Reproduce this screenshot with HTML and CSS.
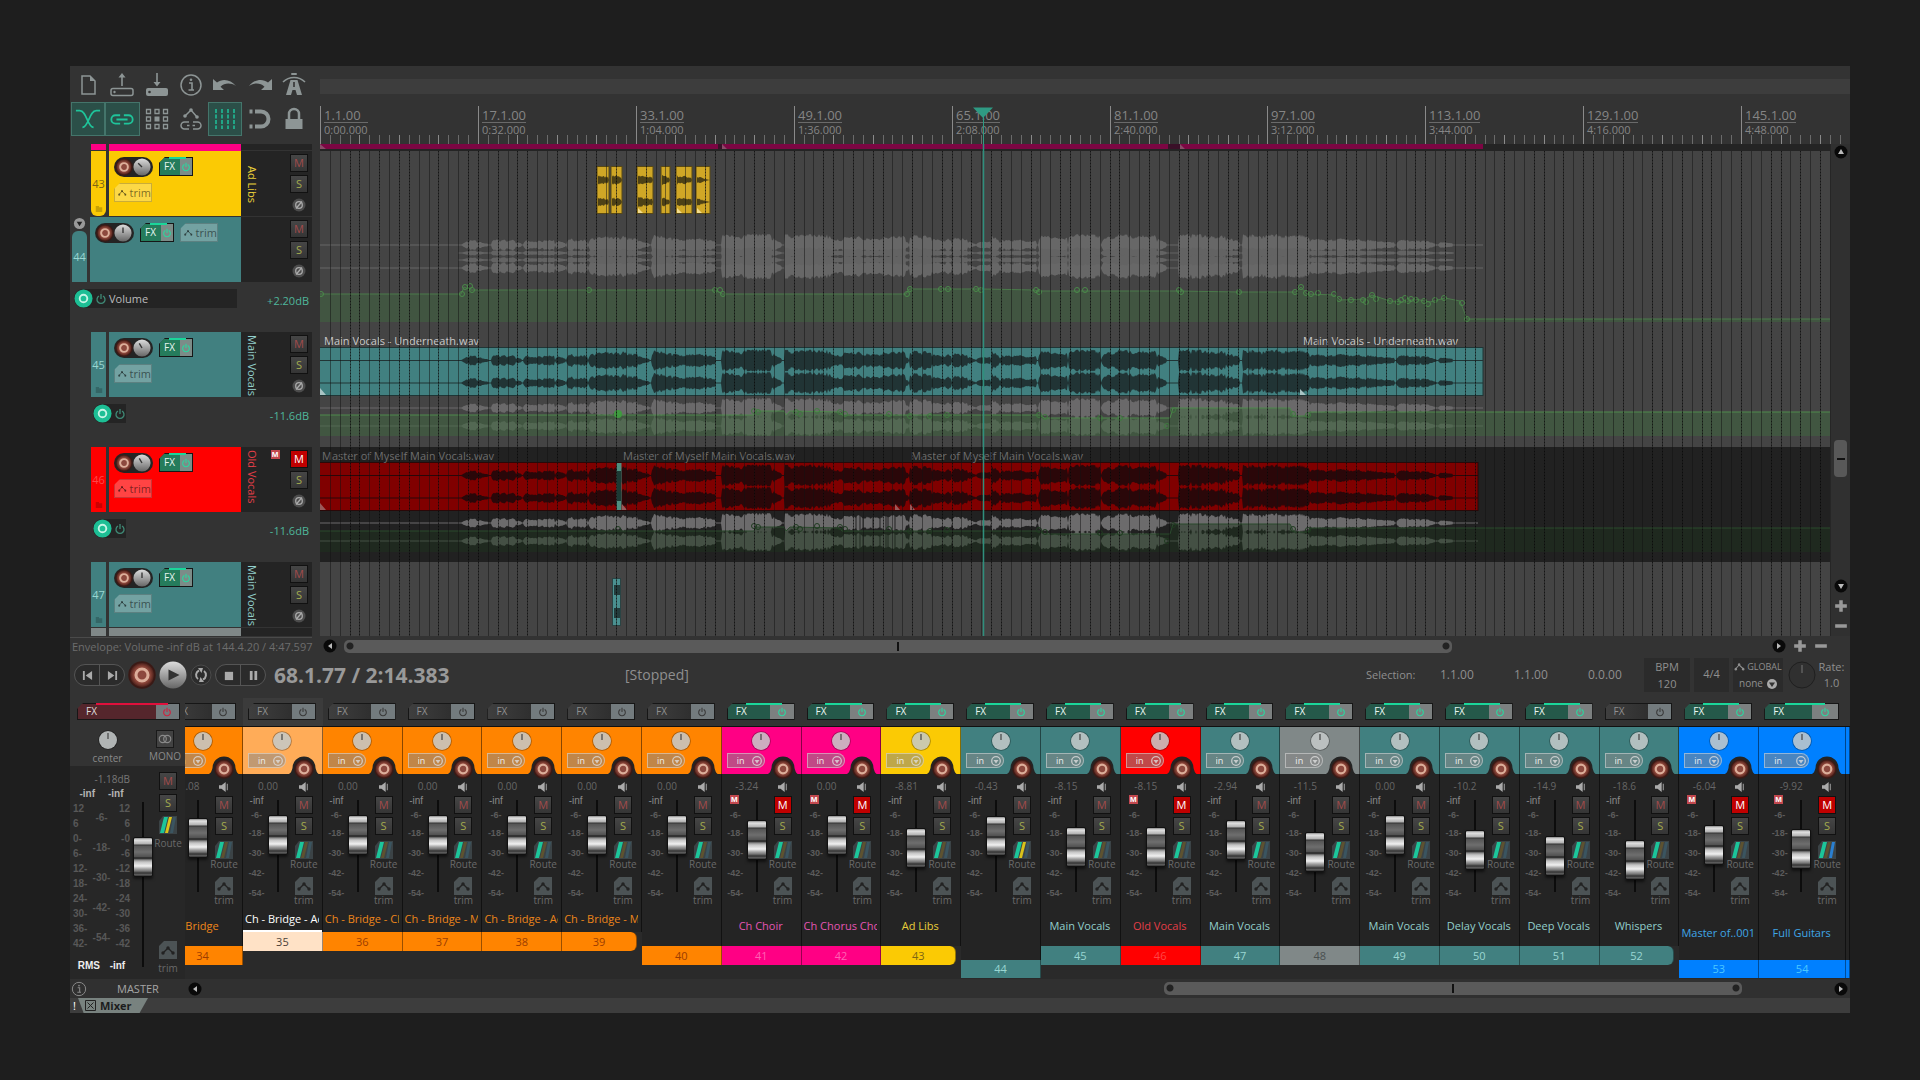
FILE: index.html
```html
<!DOCTYPE html>
<html lang="en">
<head>
<meta charset="utf-8">
<title>Mixer</title>
<link rel="stylesheet" href="styles.css">
</head>
<body>
<svg class="defs" aria-hidden="true">
  <defs>
    <symbol id="i-new" viewBox="0 0 24 24"><path d="M6 3h8l5 5v13H6z" fill="none" stroke="currentColor" stroke-width="1.5"/><path d="M14 3v5h5z" fill="currentColor"/></symbol>
    <symbol id="i-open" viewBox="0 0 24 24"><rect x="1" y="15.500" width="22" height="7" rx="2" fill="none" stroke="currentColor" stroke-width="1.500"/><circle cx="4.500" cy="19" r="1.200" fill="currentColor"/><path d="M12 0l3.500 4.500h-2.700V13h-1.600V4.500H8.500z" fill="currentColor"/></symbol>
    <symbol id="i-save" viewBox="0 0 24 24"><rect x="1" y="15" width="22" height="8" rx="2" fill="currentColor"/><circle cx="4.500" cy="19" r="1.300" fill="#333"/><path d="M12 13.500l3.500-4.500h-2.700V0h-1.600v9H8.500z" fill="currentColor"/></symbol>
    <symbol id="i-info" viewBox="0 0 24 24"><circle cx="12" cy="12" r="10" fill="none" stroke="currentColor" stroke-width="1.500"/><path d="M10 10h3v7M9.500 17h5.500" fill="none" stroke="currentColor" stroke-width="1.600"/><circle cx="12" cy="6.800" r="1.300" fill="currentColor"/></symbol>
    <symbol id="i-undo" viewBox="0 0 24 24"><path d="M0 6v11h11l-3.500-3.200c4-4 10-4.300 15.500-.8C18 6.500 9.500 5 4 9.500z" fill="currentColor"/></symbol>
    <symbol id="i-redo" viewBox="0 0 24 24"><path d="M24 6v11H13l3.500-3.200c-4-4-10-4.300-15.500-.8C6 6.500 14.500 5 20 9.500z" fill="currentColor"/></symbol>
    <symbol id="i-metro" viewBox="0 0 24 24"><path d="M1 9C7 3 17 3 23 9" fill="none" stroke="currentColor" stroke-width="1.600"/><rect x="9" y="0" width="6" height="2" rx="1" fill="currentColor"/><path d="M8.500 7h7L20 22h-5l-1.500-5h-3L9 22H4z" fill="currentColor"/><path d="M12 9v5" stroke="#333" stroke-width="1.600"/></symbol>
    <symbol id="i-xfade" viewBox="0 0 28 24"><path d="M1 3h4c8 0 8 18 15 18M27 3h-4C15 3 15 21 8 21" fill="none" stroke="currentColor" stroke-width="1.800"/></symbol>
    <symbol id="i-link" viewBox="0 0 28 24"><path d="M12 8H7a4.500 4.500 0 0 0 0 9h5M16 8h5a4.500 4.500 0 0 1 0 9h-5M8 12.500h12" fill="none" stroke="currentColor" stroke-width="2"/></symbol>
    <symbol id="i-group" viewBox="0 0 24 24"><g fill="none" stroke="currentColor" stroke-width="1.300"><path d="M1.500 2.500h4v4h-4zM10 2.500h4v4h-4zM18.500 2.500h4v4h-4zM1.500 10h4v4h-4zM18.500 10h4v4h-4zM1.500 17.500h4v4h-4zM10 17.500h4v4h-4zM18.500 17.500h4v4h-4z"/></g><path d="M9.500 9.500h5v5h-5z" fill="currentColor"/></symbol>
    <symbol id="i-envlink" viewBox="0 0 24 24"><path d="M6 9l6-6 6 7" fill="none" stroke="currentColor" stroke-width="1.500"/><circle cx="6" cy="9" r="1.800" fill="currentColor"/><circle cx="12" cy="3" r="1.800" fill="currentColor"/><circle cx="18" cy="10" r="1.800" fill="currentColor"/><path d="M10 15H5.500a3.500 3.500 0 0 0 0 7H10M14 15h4.500a3.500 3.500 0 0 1 0 7H14M8 18.500h2.500M13.500 18.500H16" fill="none" stroke="currentColor" stroke-width="1.500"/></symbol>
    <symbol id="i-grid" viewBox="0 0 24 24"><path d="M3 2v20M9 2v20M15 2v20M21 2v20" stroke="currentColor" stroke-width="1.500" stroke-dasharray="4 1.500"/></symbol>
    <symbol id="i-snap" viewBox="0 0 24 24"><path d="M7 4.500h6a7.500 7.500 0 0 1 0 15H7" fill="none" stroke="currentColor" stroke-width="4"/><path d="M1.500 2.500h3v4h-3zM1.500 17.500h3v4h-3z" fill="currentColor"/></symbol>
    <symbol id="i-lock" viewBox="0 0 24 24"><path d="M3.500 12h17v10h-17z" fill="currentColor"/><path d="M7 12V7a5 5 0 0 1 10 0v5" fill="none" stroke="currentColor" stroke-width="2.500"/></symbol>
    <symbol id="i-power" viewBox="0 0 12 12"><path d="M4 3a4 4 0 1 0 4 0M6 1v5" fill="none" stroke="currentColor" stroke-width="1.300"/></symbol>
    <symbol id="i-trim" viewBox="0 0 14 12"><path d="M2 9l4.500-5L12 9" fill="none" stroke="currentColor" stroke-width="1.400"/><circle cx="2" cy="9.500" r="1.700" fill="currentColor"/><circle cx="6.500" cy="3.500" r="1.700" fill="currentColor"/><circle cx="12" cy="9.500" r="1.700" fill="currentColor"/></symbol>
    <symbol id="i-phase" viewBox="0 0 14 14"><circle cx="7" cy="7" r="6.500" fill="#4c4c4c"/><circle cx="7" cy="7" r="3.300" fill="none" stroke="#aaa" stroke-width="1.300"/><path d="M4 10.500l6-7" stroke="#aaa" stroke-width="1.300"/></symbol>
    <symbol id="i-speaker" viewBox="0 0 12 12"><path d="M0 4h3l5-4v12L3 8H0z" fill="#aaa"/><path d="M10 2v8" stroke="#888" stroke-width="1.500"/></symbol>
    <symbol id="i-folder" viewBox="0 0 8 8"><path d="M0 1h4v1.500h4V8H0z" fill="currentColor"/></symbol>
    <radialGradient id="g-rec"><stop offset="0" stop-color="#8d4a40"/><stop offset=".7" stop-color="#8a4438"/><stop offset="1" stop-color="#4e211b"/></radialGradient>
    <linearGradient id="g-play" x1="0" y1="0" x2="0" y2="1"><stop offset="0" stop-color="#ddd"/><stop offset="1" stop-color="#666"/></linearGradient>
    <symbol id="i-rec" viewBox="0 0 20 20"><circle cx="10" cy="10" r="9.800" fill="#3a1915"/><circle cx="10" cy="10" r="8.500" fill="url(#g-rec)"/><circle cx="10" cy="10" r="4.300" fill="none" stroke="#dcae9a" stroke-width="2.200"/></symbol>
    <symbol id="i-left" viewBox="0 0 14 14"><circle cx="7" cy="7" r="6.500" fill="#090909"/><path d="M9 4v6L5 7z" fill="#bbb"/></symbol>
    <symbol id="i-right" viewBox="0 0 14 14"><circle cx="7" cy="7" r="6.500" fill="#090909"/><path d="M5 4v6l4-3z" fill="#bbb"/></symbol>
    <symbol id="i-up" viewBox="0 0 14 14"><circle cx="7" cy="7" r="6.500" fill="#090909"/><path d="M4 9h6L7 4z" fill="#bbb"/></symbol>
    <symbol id="i-down" viewBox="0 0 14 14"><circle cx="7" cy="7" r="6.500" fill="#090909"/><path d="M4 5h6l-3 5z" fill="#bbb"/></symbol>
    <symbol id="i-plus" viewBox="0 0 12 12"><path d="M4.500 1h3v3.500H11v3H7.500V11h-3V7.500H1v-3h3.500z" fill="#999"/></symbol>
    <symbol id="i-minus" viewBox="0 0 12 12"><path d="M1 4.500h10v3H1z" fill="#999"/></symbol>
    <symbol id="i-drop" viewBox="0 0 10 10"><circle cx="5" cy="5" r="5" fill="#aaa"/><path d="M2 3.500h6L5 8z" fill="#333"/></symbol>
  </defs>
</svg>

<main class="app">
  <section class="top">
    <nav class="toolbar" aria-label="Main toolbar">
      <button class="tool" aria-label="New project"><svg><use href="#i-new"/></svg></button>
      <button class="tool" aria-label="Open project"><svg><use href="#i-open"/></svg></button>
      <button class="tool" aria-label="Save project"><svg><use href="#i-save"/></svg></button>
      <button class="tool" aria-label="Project settings"><svg><use href="#i-info"/></svg></button>
      <button class="tool" aria-label="Undo"><svg><use href="#i-undo"/></svg></button>
      <button class="tool" aria-label="Redo"><svg><use href="#i-redo"/></svg></button>
      <button class="tool" aria-label="Metronome"><svg><use href="#i-metro"/></svg></button>
      <button class="tool on" aria-label="Auto-crossfade"><svg><use href="#i-xfade"/></svg></button>
      <button class="tool on" aria-label="Item grouping"><svg><use href="#i-link"/></svg></button>
      <button class="tool" aria-label="Ripple editing"><svg><use href="#i-group"/></svg></button>
      <button class="tool" aria-label="Move envelopes with items"><svg><use href="#i-envlink"/></svg></button>
      <button class="tool on" aria-label="Grid"><svg><use href="#i-grid"/></svg></button>
      <button class="tool" aria-label="Snap"><svg><use href="#i-snap"/></svg></button>
      <button class="tool" aria-label="Lock"><svg><use href="#i-lock"/></svg></button>
    </nav>
    <div class="timeline-head">
      <div class="region-bar"></div>
      <div class="ruler" id="ruler"></div>
    </div>
  </section>

  <section class="edit">
    <div class="tcp" id="tcp"></div>
    <div class="arrange" id="arrange"></div>
    <div class="vscroll">
      <button class="rnd" aria-label="Scroll up"><svg><use href="#i-up"/></svg></button>
      <div class="vtrack"><div class="vthumb"></div></div>
      <button class="rnd" aria-label="Scroll down"><svg><use href="#i-down"/></svg></button>
      <button class="rnd" aria-label="Zoom in"><svg><use href="#i-plus"/></svg></button>
      <button class="rnd" aria-label="Zoom out"><svg><use href="#i-minus"/></svg></button>
    </div>
  </section>

  <section class="status">
    <p class="status-text">Envelope: Volume -inf dB at 144.4.20 / 4:47.597</p>
    <div class="hscroll">
      <button class="rnd" aria-label="Scroll left"><svg><use href="#i-left"/></svg></button>
      <div class="htrack"><div class="hthumb arrange-thumb"></div></div>
      <button class="rnd" aria-label="Scroll right"><svg><use href="#i-right"/></svg></button>
      <button class="rnd" aria-label="Zoom in"><svg><use href="#i-plus"/></svg></button>
      <button class="rnd" aria-label="Zoom out"><svg><use href="#i-minus"/></svg></button>
    </div>
  </section>

  <section class="transport">
    <div class="pill">
      <button aria-label="Go to start"><svg viewBox="0 0 12 12"><path d="M1 1h2v10H1zM11 1v10L4 6z" fill="#aaa"/></svg></button>
      <button aria-label="Go to end"><svg viewBox="0 0 12 12"><path d="M9 1h2v10H9zM1 1v10l7-5z" fill="#aaa"/></svg></button>
    </div>
    <button class="big" aria-label="Record"><svg viewBox="0 0 20 20"><use href="#i-rec"/></svg></button>
    <button class="big" aria-label="Play"><svg viewBox="0 0 28 28"><circle cx="14" cy="14" r="13.500" fill="url(#g-play)"/><path d="M9.500 8.500v11l11-5.500z" fill="#333"/></svg></button>
    <button class="loop" aria-label="Repeat"><svg viewBox="0 0 22 22"><circle cx="11" cy="11" r="10" fill="#2c2c2c" stroke="#4a4a4a"/><path d="M8 15a5 5 0 0 1 1-8.500M14 7a5 5 0 0 1-1 8.500" fill="none" stroke="#aaa" stroke-width="2"/><path d="M8 4h5l-1.500 5zM14 18H9l1.500-5z" fill="#aaa"/></svg></button>
    <div class="pill">
      <button aria-label="Stop"><svg viewBox="0 0 12 12"><path d="M2 2h9v9H2z" fill="#aaa"/></svg></button>
      <button aria-label="Pause"><svg viewBox="0 0 12 12"><path d="M2 1h3v10H2zM7 1h3v10H7z" fill="#aaa"/></svg></button>
    </div>
    <output class="clock">68.1.77 / 2:14.383</output>
    <output class="state">[Stopped]</output>
    <div class="selection"><b>Selection:</b><span>1.1.00</span><span>1.1.00</span><span>0.0.00</span></div>
    <div class="box bpm"><span>BPM</span><span>120</span></div>
    <div class="box sig">4/4</div>
    <div class="box global">
      <label for="global"><svg viewBox="0 0 14 12"><use href="#i-trim"/></svg>GLOBAL</label>
      <div class="global-pick"><select id="global"><option>none</option></select><svg viewBox="0 0 10 10"><use href="#i-drop"/></svg></div>
    </div>
    <svg class="rate-knob" viewBox="0 0 28 28"><circle cx="14" cy="14" r="13" fill="#303030" stroke="#1f1f1f"/><path d="M14 4v8" stroke="#777"/></svg>
    <div class="rate"><span>Rate:</span><span>1.0</span></div>
  </section>

  <section class="mixer">
    <div class="master" id="master"></div>
    <div class="strips" id="strips"></div>
  </section>

  <section class="mixer-foot">
    <div class="master-label"><svg viewBox="0 0 24 24"><use href="#i-info"/></svg><span>MASTER</span></div>
    <button class="rnd" aria-label="Scroll mixer left"><svg><use href="#i-left"/></svg></button>
    <div class="htrack"><div class="hthumb mixer-thumb"></div></div>
    <button class="rnd" aria-label="Scroll mixer right"><svg><use href="#i-right"/></svg></button>
  </section>
  <footer class="docker"><span class="bang">!</span><button class="tab"><svg viewBox="0 0 11 11"><path d="M.5.500h10v10H.5zM2.500 2.500l6 6M8.500 2.500l-6 6" fill="none" stroke="#222"/></svg>Mixer</button></footer>
</main>
<script src="script.js"></script>
</body>
</html>
```
FILE: styles.css
```css
* { box-sizing: border-box; }
body { margin: 0; padding: 66px 70px; background: #1e1e1e; color: #8a8a8a; font: 11px/14px "Open Sans", "Noto Sans", sans-serif; }
button, select, input { font: inherit; color: inherit; margin: 0; padding: 0; border: 0; background: none; }
p { margin: 0; }
svg { display: block; }
.defs { position: absolute; width: 0; height: 0; }
.app { background: #333; overflow: hidden; }

/* toolbar and ruler */
.top { display: grid; grid-template-columns: 250px 1fr; }
.toolbar { display: grid; grid-template-columns: repeat(7, 1fr); grid-auto-rows: 34px; width: 241px; padding: 2px 0 8px 1px; }
.tool { display: grid; place-items: center; color: #8d9595; border: 1px solid transparent; }
.tool svg { width: 24px; height: 24px; }
.tool.on { background: #2b4f48; border-color: #44756b; color: #1fc49a; }
.tool.on svg { width: 26px; }
.timeline-head { display: flex; flex-direction: column; min-width: 0; }
.region-bar { height: 15px; margin-top: 13px; background: #3d3d3d; }
.ruler { position: relative; flex: 1; overflow: hidden; }
.ruler svg { position: absolute; inset: 0; width: 100%; height: 100%; }
.mark { position: absolute; top: 14px; color: #858585; line-height: 13px; }
.mark b { display: block; font-weight: 400; font-size: 13px; line-height: 14px; border-bottom: 1px solid #6a6a6a; }

/* track panel */
.edit { display: grid; grid-template-columns: 250px 1fr 19px; height: 492px; overflow: hidden; }
.tcp { overflow: hidden; }
.row { display: flex; height: 65px; width: 242px; padding-left: 21px; color: var(--ink); }
.row.parent { padding-left: 2px; }
.row.gap { height: 66px; padding-bottom: 1px; }
.row.tail { height: 8px; overflow: hidden; }
.row.head { height: 7px; padding-bottom: 1px; overflow: hidden; }
.num { position: relative; display: flex; align-items: center; justify-content: center; width: 15px; background: var(--c); }
.num svg { position: absolute; left: 4px; bottom: 4px; width: 8px; height: 7px; color: #0003; }
.row.last .num { border-radius: 0 0 6px 6px; }
.parent .num { border-radius: 6px 6px 0 0; margin-top: 14px; }
.num .parent-tick { left: 1px; top: -14px; width: 13px; height: 13px; }
.panel { display: flex; flex-wrap: wrap; align-content: flex-start; gap: 6px; width: 132px; margin-left: 3px; padding: 6px 5px; background: var(--c); }
.parent .panel { width: 151px; margin-left: 3px; }
.side { display: flex; flex: 1; justify-content: space-between; background: #242424; padding: 3px 4px 0 5px; min-width: 0; }
.vname { writing-mode: vertical-rl; font-size: 11px; line-height: 12px; height: 62px; white-space: nowrap; color: var(--name); }
.last .vname { padding-top: 12px; }
.side-btns { display: flex; flex-direction: column; align-items: center; gap: 3px; width: 18px; }
.side-btns svg { width: 14px; height: 14px; margin-top: 2px; }
.badge { width: 9px; height: 9px; background: #c2484e; color: #fff; font: 700 8px/9px "Liberation Sans", sans-serif; text-align: center; }
.side .badge { margin: 0 -2px 0 0; }
.pan-pill { display: flex; width: 39px; height: 20px; padding: 1px; border-radius: 10px; background: #242424; }
.pan-pill svg { width: 18px; height: 18px; }
.fx { position: relative; display: flex; width: 100%; height: 17px; border: 1px solid #161616; background: #3a3a3a; color: #8f8f8f; clip-path: polygon(6px 0, 100% 0, 100% 100%, 0 100%, 0 6px); font-size: 10px; line-height: 15px; }
.fx span { flex: 3; text-align: left; padding-left: 8px; background: linear-gradient(90deg, #3f3f3f, #2f2f2f); }
.fx i { flex: 2; display: grid; place-items: center; height: 100%; background: #737b7e; color: #3a3a3a; }
.fx svg { width: 10px; height: 10px; }
.fx.on { color: #e8f5f0; }
.fx.on span { background: #25594a; }
.fx.on i { background: #7c8080; color: #2bd8a0; }
.fx.on::before { content: ""; position: absolute; top: -1px; left: 27%; width: 55%; height: 2px; background: #1bd69a; }
.panel .fx { width: 34px; height: 19px; line-height: 17px; }
.panel .fx span { padding-left: 4px; flex: 5; background: #257c5c; }
.panel .fx i { flex: 4; background: #7c8c88; }
.trim { display: flex; align-items: center; gap: 3px; width: 38px; height: 19px; padding-left: 3px; border: 1px solid #0003; background: #fff4; color: #0008; font-size: 11px; clip-path: polygon(6px 0, 100% 0, 100% 100%, 0 100%, 0 6px); }
.trim svg { width: 12px; height: 11px; }
.ms { width: 18px; height: 18px; border: 1px solid #111; background: linear-gradient(#464646, #353535); text-align: center; font-size: 11px; line-height: 16px; }
.m { color: #a24b4b; }
.s { color: #a3ab4e; }
.m.on { background: #c00000; color: #fff; }
.env { display: flex; align-items: flex-start; justify-content: space-between; width: 241px; height: 50px; padding: 7px 2px 0 4px; }
.env.child { padding-left: 23px; }
.env-name { display: flex; align-items: center; gap: 2px; background: #242424; height: 19px; border-radius: 9px 0 0 9px; color: #bbb; }
.env-name svg { width: 19px; height: 19px; }
.env-name svg + svg { width: 12px; height: 12px; color: #3f8a76; }
.env-name label { width: 128px; font-size: 11px; }
.env.child .env-name { width: 33px; }
.env output { color: #4fb79b; line-height: 14px; margin-top: 5px; }

/* arrange canvas */
.arrange { position: relative; overflow: hidden; background: #444; border-right: 1px solid #262626; }
.lane { position: relative; }
.lane svg, .overlay { width: 100%; height: 100%; }
.overlay { position: absolute; inset: 0; pointer-events: none; }
.item-name { position: absolute; top: 2px; white-space: nowrap; color: #c8c8c8; }
.lane.muted { background: #212121; }
.lane.muted .item-name { color: #6d6d6d; }

.vscroll { display: flex; flex-direction: column; align-items: center; gap: 6px; padding: 1px 0 3px; background: #303030; }
.vtrack { flex: 1; padding-top: 275px; }
.vthumb { width: 13px; height: 37px; border-radius: 4px; background: linear-gradient(#111, #111) center/8px 2px no-repeat #585858; }
.rnd { width: 14px; height: 14px; flex: none; }
.rnd svg { width: 14px; height: 14px; }

.status { display: grid; grid-template-columns: 250px 1fr; height: 20px; align-items: center; }
.status-text { padding-left: 2px; font-size: 11px; color: #6d6d6d; white-space: nowrap; border-top: 1px solid #4a4a4a; width: 242px; line-height: 18px; }
.hscroll { display: flex; align-items: center; gap: 7px; padding: 0 22px 0 3px; }
.htrack { flex: 1; }
.hthumb { height: 13px; border-radius: 5px; background: radial-gradient(circle at 6px 6px, #222 3px, transparent 4px), radial-gradient(circle at calc(100% - 6px) 6px, #222 3px, transparent 4px), linear-gradient(#111, #111) center/2px 9px no-repeat, #5a5a5a; }
.arrange-thumb { width: 78%; }

/* transport */
.transport { display: flex; align-items: center; height: 42px; padding: 0 3px 4px 4px; color: #8f8f8f; }
.pill { display: flex; width: 51px; height: 22px; border: 1px solid #555; border-radius: 11px; background: #2b2b2b; }
.pill button { flex: 1; display: grid; place-items: center; }
.pill button + button { border-left: 1px solid #555; }
.pill svg { width: 11px; height: 11px; }
.big { width: 28px; height: 28px; margin-left: 3px; }
.loop { width: 22px; height: 22px; margin: 0 3px; }
.clock { margin-left: 8px; width: 351px; font-size: 21px; line-height: 28px; font-weight: 700; color: #999; }
.state { font-size: 14px; }
.selection { display: flex; gap: 27px; margin-left: auto; margin-right: 24px; font-size: 12px; }
.selection b { width: 47px; font-size: 11px; font-weight: 400; white-space: nowrap; }
.selection span { width: 47px; white-space: nowrap; }
.selection span:last-child { width: 32px; }
.box { background: #2b2b2b; height: 34px; margin-right: 4px; text-align: center; line-height: 17px; }
.box span { display: block; }
.bpm { width: 46px; }
.sig { width: 35px; line-height: 32px; }
.global { width: 50px; margin-right: 5px; font-size: 9px; }
.global label, .global-pick { display: flex; align-items: center; justify-content: center; gap: 2px; height: 17px; }
.global label svg { width: 11px; height: 9px; }
.global-pick svg { width: 10px; height: 10px; }
select { appearance: none; }
.global select { font-size: 10px; width: 26px; }
.rate-knob { width: 28px; height: 28px; }
.rate { width: 31px; text-align: center; line-height: 16px; font-size: 11px; }
.rate span { display: block; }

/* mixer */
.mixer { display: flex; height: 281px; background: #2a2a2a; }
.master { width: 115px; background: #272727; font-size: 10px; }
.master-head { display: grid; grid-template-columns: 63px 1fr; height: 68px; padding: 5px 6px 0; background: #333; justify-items: center; row-gap: 8px; }
.master-head .fx { grid-column: 1 / 3; width: 103px; background: #55262c; color: #ddd; }
.master-head .fx span { background: #55262c; flex: 3; }
.master-head .fx i { flex: 1; color: #d0213e; }
.master-head .fx::before { content: ""; position: absolute; top: -1px; left: 18px; width: 72px; height: 2px; background: #e0103c; }
.knob-cell { display: flex; flex-direction: column; align-items: center; gap: 1px; }
.knob { width: 20px; height: 20px; }
.mono { margin-left: 10px; }
.mono svg { width: 18px; height: 18px; background: #424242; border: 1px solid #1a1a1a; }
.master-body { display: flex; height: 213px; }
.meters { width: 63px; padding: 6px 3px 0 3px; color: #666; }
.meters .db { text-align: right; line-height: 15px; font-size: 10px; color: #777; }
.inf { display: flex; justify-content: space-around; font: 700 10px/14px "Liberation Sans", sans-serif; color: #b5b5b5; }
.cols { display: flex; height: 158px; font: 700 10px/15px "Liberation Sans", sans-serif; color: #585858; }
.cols div { flex: 1; }
.cols div:nth-child(2) { line-height: 30px; text-align: center; padding-top: 2px; }
.cols div:nth-child(3) { text-align: right; }
.cols span { display: block; }
.inf.rms { color: #eee; }
.side-col { display: flex; flex-direction: column; align-items: center; width: 22px; font-size: 10px; line-height: 10px; color: #6a6a6a; }
.route, .trimbox { width: 18px; height: 18px; }
.route svg, .trimbox svg { width: 18px; height: 18px; }
.master .side-col { padding: 6px 0; margin-left: 4px; gap: 4px; }
.master .side-col .trimbox { margin-top: auto; }
.fader { appearance: none; writing-mode: vertical-lr; direction: rtl; display: block; width: 20px; background: linear-gradient(#0c0c0c, #0c0c0c) center/2px calc(100% - 10px) no-repeat; }
.fader::-webkit-slider-runnable-track { width: 20px; }
.fader::-webkit-slider-thumb { appearance: none; width: 20px; height: 40px; border: 1px solid #111; border-radius: 2px; box-shadow: 0 2px 3px #0008;
  background: linear-gradient(#8a8a8a 0, #e2e2e2 2px, #b0b0b0 6px, #333 7px, #555 8px, #6e6e6e 14px, #505050 19px, #161616 20px, #8a8a8a 22px, #c4c4c4 24px, #f0f0f0 28px, #a0a0a0 31px, #777 33px, #333 35px, #666 37px, #222 38px); }
.master .fader { height: 175px; margin-top: 31px; }

.strips { display: flex; flex: 1; min-width: 0; align-items: flex-start; overflow: hidden; }
.strip { flex: 1 1 0; min-width: 0; }
.strip.first { flex: none; width: 58px; display: flex; justify-content: flex-end; overflow: hidden; }
.strip.first .strip-in { flex: none; width: 80px; }
.strip.wide { flex: none; width: 87px; }
.strip.edge { flex: none; width: 4px; }
.fxrow { height: 29px; padding: 5px 7px 0 5px; background: #333; border-bottom: 1px solid #111; }
.sel .fxrow { background: #3b3b3b; }
.cap { position: relative; height: 47px; padding-top: 4px; background: var(--c); border-right: 1px solid #0007; }
.cap .knob { margin: 0 auto; }
.in { display: flex; align-items: center; width: 38px; height: 15px; margin: 2px 0 0 5px; padding: 0 2px 0 9px; border: 1px solid #fff6; border-radius: 0 8px 8px 0; background: #8888; color: #eee; }
.wide .in { width: 45px; }
.in select { flex: 1; min-width: 0; font-size: 9px; line-height: 12px; }
.in svg { width: 10px; height: 10px; opacity: .8; }
.arm { position: absolute; right: 2px; bottom: -5px; width: 32px; height: 22px; }
.arm svg { width: 32px; height: 22px; overflow: visible; }
.body { display: flex; flex-direction: column; height: 172px; background: #242424; border-right: 1px solid #111; }
.up .body { height: 158px; }
.low .body { height: 186px; }
.ctl { display: flex; justify-content: space-between; height: 131px; flex: none; padding: 0 7px 0 2px; }
.wide .ctl { padding-left: 9px; }
.ctl-left { width: 46px; }
.val { height: 21px; padding-top: 5px; text-align: center; color: #666; font-size: 10px; }
.fader-row { display: flex; }
.scale { width: 23px; font: 700 9px/20px "Liberation Sans", sans-serif; color: #5c5c5c; text-align: center; }
.scale span, .scale .badge { display: block; }
.scale span:first-child { line-height: 12px; font-weight: 400; font-size: 10px; color: #888; }
.scale span:nth-child(2) { line-height: 16px; }
.scale .badge { margin: 0 0 3px 6px; }
.ctl .fader { height: 102px; }
.ctl .side-col { padding-top: 8px; }
.side-col .spk { width: 12px; height: 12px; margin-bottom: 4px; }
.ctl .ms + .ms { margin: 3px 0 6px; }
.ctl .trimbox { margin-top: 8px; }
.name { flex: 1; display: grid; align-items: center; margin: 0 3px 0 2px; }
.name span { overflow: hidden; white-space: nowrap; text-align: center; font-size: 11px; color: var(--name); line-height: 16px; }
.tag { display: flex; align-items: center; justify-content: center; height: 19px; background: var(--c); color: var(--ink); border-right: 1px solid #0006; }
.end .tag { margin-right: 5px; border-radius: 0 6px 6px 0; }
.sel .tag { background: #ffe2c6; }
.sel .body { box-shadow: inset 0 -2px #fff; }
.low .tag { height: 18px; }

.mixer-foot { display: flex; align-items: center; height: 19px; background: #303030; padding-right: 2px; }
.master-label { display: flex; align-items: center; width: 118px; color: #a5a5a5; }
.master-label svg { width: 16px; height: 16px; margin-left: 1px; color: #888; }
.master-label span { margin-left: 30px; }
.mixer-foot .htrack { margin: 0 92px 0 0; }
.mixer-thumb { width: 578px; margin-left: auto; }
.docker { display: flex; height: 15px; background: #3d3d3d; }
.bang { color: #fff; width: 8px; padding-left: 3px; line-height: 15px; }
.tab { display: flex; align-items: center; gap: 4px; width: 70px; padding-left: 7px; background: #78827f; color: #1c1c1c; font-weight: 700; line-height: 15px; clip-path: polygon(0 0, 100% 0, 88% 100%, 8% 100%); }
.tab svg { width: 11px; height: 11px; }
```
FILE: script.js
```js
const COLORS = {
  orange: ['#ff8400', '#9c3c00', '#ee861a'],
  light: ['#ffac58', '#4a4038', '#ffffff'],
  pink: ['#ff0084', '#ff62b4', '#e456b4'],
  yellow: ['#fbca04', '#7d6614', '#e8cf3a'],
  teal: ['#418080', '#9ad6d2', '#92cfcb'],
  red: ['#ff0000', '#ff4646', '#e23e48'],
  grey: ['#808888', '#4a5050', '#999999'],
  blue: ['#0080ff', '#4cc8ff', '#3fa6e6']
};
const vars = c => `--c:${COLORS[c][0]};--ink:${COLORS[c][1]};--name:${COLORS[c][2]}`;
const use = (id, box) => `<svg viewBox="${box}"><use href="#${id}"/></svg>`;
const knob = () => `<svg class="knob" viewBox="0 0 20 20"><circle cx="10" cy="10" r="9.800" fill="#0005"/><circle cx="10" cy="10" r="9" fill="#d4d9d9" fill-opacity=".8"/><path d="M10 3v6" stroke="#444" stroke-width="1.200"/></svg>`;
const fx = on => `<button class="fx${on ? ' on' : ''}"><span>FX</span><i>${use('i-power', '0 0 12 12')}</i></button>`;
const ms = mute => `<button class="ms m${mute ? ' on' : ''}">M</button><button class="ms s">S</button>`;
const fader = (label, max, v) => `<input class="fader" type="range" aria-label="${label}" min="0" max="${max}" value="${v}">`;
const route = extra => `<button class="route" aria-label="Route"><svg viewBox="0 0 18 18"><path d="M4 0h14v18H0V5z" fill="#3b4346"/><path d="M5 1h4L5 17H1z" fill="#1cc59a"/><path d="M10 1h3L9 17H6z" fill="${extra === 'y' ? '#d9c21a' : '#5d5230'}"/><path d="M14 1h3l-3 16h-3z" fill="${extra === 'b' ? '#2a7fd0' : '#3b5560'}"/></svg></button><span>Route</span>`;
const trimbox = () => `<button class="trimbox" aria-label="Trim"><svg viewBox="0 0 18 18"><path d="M5 0h13v18H0V5z" fill="#4c5355"/><path d="M4 12l5-5 5 5" fill="none" stroke="#222" stroke-width="1.400"/><circle cx="4" cy="12" r="1.700" fill="#222"/><circle cx="9" cy="7" r="1.700" fill="#222"/><circle cx="14" cy="12" r="1.700" fill="#222"/></svg></button><span>trim</span>`;

/* track control panel */
const pan = angle => `<div class="pan-pill">${use('i-rec', '0 0 20 20')}<svg viewBox="0 0 20 20"><circle cx="10" cy="10" r="9.500" fill="url(#g-play)"/><path d="M10 4v6" stroke="#333" stroke-width="1.500" transform="rotate(${angle} 10 10)"/></svg></div>`;
const row = (n, c, name, o = {}) => `<div class="row ${o.cls || ''}" style="${vars(c)}">
  <div class="num">${o.parent ? `<svg class="parent-tick" viewBox="0 0 14 14"><circle cx="7" cy="7" r="6" fill="#999"/><path d="M4 5h6l-3 5z" fill="#222"/></svg>` : `${use('i-folder', '0 0 8 8')}`}${n}</div>
  <div class="panel">${pan(o.angle || 0)}${fx(true)}<button class="trim">${use('i-trim', '0 0 14 12')}trim</button></div>
  <div class="side"><span class="vname">${name}</span>${o.mute ? '<span class="badge">M</span>' : ''}<div class="side-btns">${ms(o.mute)}${use('i-phase', '0 0 14 14')}</div></div></div>`;
const ring = `<svg viewBox="0 0 20 20"><circle cx="10" cy="10" r="9.500" fill="#1dbf95"/><circle cx="10" cy="10" r="4" fill="none" stroke="#c6f5e6" stroke-width="2"/></svg>`;
const env = (label, v) => `<div class="env${label ? '' : ' child'}"><div class="env-name">${ring}${use('i-power', '0 0 12 12')}${label ? `<label>${label}</label>` : ''}</div><output>${v}</output></div>`;
document.getElementById('tcp').innerHTML =
  `<div class="row head" style="${vars('pink')}"><div class="num"></div><div class="panel"></div><div class="side"></div></div>` +
  row(43, 'yellow', 'Ad Libs', { cls: 'gap last', angle: -45 }) +
  row(44, 'teal', '', { cls: 'parent', parent: true }) + env('Volume', '+2.20dB') +
  row(45, 'teal', 'Main Vocals', { angle: -30 }) + env('', '-11.6dB') +
  row(46, 'red', 'Old Vocals', { angle: -30, mute: true }) + env('', '-11.6dB') +
  row(47, 'teal', 'Main Vocals', { cls: 'gap' }) +
  `<div class="row tail" style="${vars('grey')}"><div class="num"></div><div class="panel"></div><div class="side"></div></div>`;

/* ruler: one label every 16 bars */
const LABEL = 157.9, BAR = LABEL / 16;
const stamps = ['0:00.000', '0:32.000', '1:04.000', '1:36.000', '2:08.000', '2:40.000', '3:12.000', '3:44.000', '4:16.000', '4:48.000'];
let ticks = '';
for (let i = 0; i < 400; i++) {
  const x = Math.round(i * BAR) + .5;
  ticks += `<path d="M${x} ${i % 16 ? 41 : 12}V50" stroke="${i % 4 ? '#6b6b6b' : '#8a8a8a'}"/>`;
}
document.getElementById('ruler').innerHTML = `<svg>${ticks}</svg>` +
  stamps.map((t, i) => `<div class="mark" style="left:${Math.round(i * LABEL) + 4}px"><b>${i * 16 + 1}.1.00</b>${t}</div>`).join('') +
  `<svg><path d="M653 13.500h20L663 24z" fill="#2f9a83"/><path d="M663.500 22V60" stroke="#2f9a83"/></svg>`;

/* loudness of the vocal take: start, end, level at start, level at end */
const TAKE = [
  [141, 148, .1, .4], [148, 157, .45, .4], [157, 169, .35, .1], [172, 180, .65, .4], [180, 196, .5, .45], [196, 202, .4, .1], [204, 222, .5, .35],
  [222, 235, .45, .4], [236, 246, .45, .2], [247, 268, .55, .5], [269, 300, .8, .65], [300, 318, .8, .65], [318, 330, .5, .1],
  [332, 352, .75, .85], [352, 384, .65, .55], [384, 396, .55, .35], [402, 452, 1, 1], [452, 462, .8, .2], [465, 508, 1, 1], [508, 522, .9, .4],
  [522, 560, .7, .75], [560, 586, .9, .8], [586, 589, .6, .2], [590, 612, 1, .8], [612, 625, .7, .45], [625, 632, .7, .4], [633, 648, .8, .5], [648, 656, .4, .1],
  [657, 671, .25, .35], [672, 680, 1, .5], [680, 717, .5, .4], [719, 748, .8, .75], [749, 781, 1, .95], [782, 798, .7, .75], [798, 837, .95, .9], [837, 847, .8, .2],
  [859, 906, 1, 1], [906, 920, .9, .3], [923, 979, 1, .95], [979, 990, .95, .7], [990, 1015, .6, .45], [1015, 1045, .6, .45], [1045, 1075, .5, .25],
  [1077, 1100, .5, .5], [1100, 1117, .5, .1], [1119, 1133, .25, .2]
];
let seed = 7;
const rnd = () => (seed = (seed * 16807) % 2147483647) / 2147483647;
const LEVEL = new Float32Array(1200);
let drift = .5;
for (const [a, b, s, e] of TAKE)
  for (let x = a; x < b; x++) {
    drift = drift * .75 + rnd() * .25;
    const base = s + (e - s) * (x - a) / (b - a);
    const attack = base > .9 ? 1 : Math.min(1, .6 + (x - a) * .2);
    LEVEL[x] = base * attack * (.92 + .3 * (rnd() - .5) + .9 * (drift - .5));
  }
const wave = (y, half, color, end = 1163, from = 0) => {
  let up = '', down = '';
  for (let x = from; x <= end; x++) {
    const h = Math.max(.5, Math.min(1.08, LEVEL[x] || 0) * half);
    up += `L${x} ${(y - h).toFixed(1)}`;
    down = `L${x} ${(y + h).toFixed(1)}` + down;
  }
  return `<path d="M${from} ${y}${up}${down}z" fill="${color}"/>`;
};
const curve = (pts, floor, line, fill) => {
  const d = pts.map(p => p.join(' ')).join('L');
  return `<path d="M${d}V${floor}H0z" fill="${fill}"/><path d="M${d}" fill="none" stroke="${line}"/>`;
};
const dots = (pts, color) => pts.map(([x, y]) => `<circle cx="${x}" cy="${y}" r="2.500" fill="none" stroke="${color}"/>`).join('');
const lane = (h, art, names = '', cls = '') => `<div class="lane ${cls}" style="height:${h}px"><svg>${art}</svg>${names}</div>`;
const title = (x, t) => `<span class="item-name" style="left:${x}px">${t}</span>`;

const clips = [[277, 12], [291, 11], [317, 16], [341, 9], [356, 16], [376, 14]].map(([x, w], i) => {
  let s = `<rect x="${x}" y="15.500" width="${w}" height="47" fill="#d0a726" stroke="#5a4a14"/>`;
  for (const y of [29, 51]) {
    let a = '', b = '';
    for (let k = 1; k < w; k++) {
      const h = (i === 5 ? 4 * (1 - k / w) : 5 - 2 * k / w) * (.6 + .5 * rnd());
      a += `L${x + k} ${y - h}`; b = `L${x + k} ${y + h}` + b;
    }
    s += `<path d="M${x + 1} ${y}${a}L${x + w} ${y}${b}z" fill="#4d4116"/>`;
  }
  return s + (i > 1 && i !== 3 ? `<path d="M${x + 1} 57v5h5z" fill="#f2dc90"/>` : '');
}).join('');

const vol44 = [[0, 77], [141, 77], [144, 70], [151, 73], [268, 73], [396, 73], [402, 77], [586, 77], [589, 72], [663, 72], [715, 73], [717, 74], [858, 74], [920, 75], [976, 75], [981, 70], [987, 77], [1015, 78], [1020, 83], [1045, 82], [1052, 78], [1070, 84], [1085, 85], [1095, 82], [1110, 85], [1125, 81], [1140, 84], [1147, 102], [1511, 102]];
const dots44 = [[1, 77], [142, 77], [145, 70], [150, 69], [152, 73], [269, 73], [395, 73], [400, 73], [403, 77], [587, 77], [590, 72], [621, 72], [628, 72], [656, 72], [661, 73], [716, 73], [719, 75], [757, 73], [765, 73], [859, 73], [861, 75], [919, 75], [975, 75], [981, 70], [986, 76], [991, 77], [998, 76], [1014, 77], [1019, 82], [1031, 83], [1043, 83], [1046, 85], [1052, 78], [1056, 82], [1070, 84], [1078, 85], [1081, 83], [1085, 81], [1088, 84], [1091, 82], [1096, 83], [1104, 84], [1108, 87], [1115, 83], [1124, 81], [1142, 86], [1147, 102]];
const vol45 = [[0, 83], [434, 83], [436, 79], [464, 79], [466, 83], [470, 79], [520, 80], [522, 83], [720, 83], [724, 86], [850, 86], [853, 76], [970, 76], [974, 84], [988, 84], [990, 80], [1511, 80]];
const knots = [[298, 82], [434, 79], [438, 80], [476, 80], [480, 82], [497, 79], [520, 80], [525, 82], [569, 82], [590, 84], [610, 84], [627, 83], [719, 83], [725, 85], [780, 86], [800, 86], [847, 94], [853, 78], [973, 82], [988, 83]];
const takeWaves = (color, end) => wave(28.5, 10, color, end) + wave(51, 10, color, end);

let grid = '';
for (let i = 1; i < 400; i++) {
  const x = Math.round(i * BAR) + .5;
  grid += `<path d="M${x} 7V492" stroke="#111" stroke-opacity=".5"/>`;
  if (i % 4 < 1 || i % 3 === 0) grid += `<path d="M${x} 7V492" stroke="#000" stroke-opacity=".5" stroke-dasharray="1 2"/>`;
}
document.getElementById('arrange').innerHTML =
  lane(7, '<rect width="100%" height="7" fill="#242424"/><path d="M0 0h1163v5H0z" fill="#7c0643"/><path d="M398 0h4v5h-4zM848 0h12v5h-12z" fill="#3a1028"/><path d="M0 0l6 5H0zM402 0l5 5h-5zM860 0l5 5h-5z" fill="#8a4a68"/>') +
  lane(66, clips) +
  lane(115,
    wave(28, 10, '#676767') + wave(51, 10, '#676767') + wave(36, 5, '#636363', 1134, 138) + wave(43, 5, '#636363', 1134, 138) +
    curve(vol44, 105, '#4a7a4a', '#3f613f99') + dots(dots44, '#4a8a4a')) +
  lane(115,
    '<rect x="-1" y="15.500" width="1164" height="48" fill="#418080" stroke="#1f3636"/>' + takeWaves('#213435', 1163) +
    '<path d="M0 56l6 7H0zM980 57l6 6h-6z" fill="#a9c4c4"/>' +
    wave(76, 9, '#6a696a') + wave(94, 9, '#6a6a6a') + curve(vol45, 104, '#4f8a4c', '#3f683f88') + dots(knots, '#3f7a3f') + '<circle cx="298" cy="82" r="4" fill="#3f9a3f"/>',
    title(4, 'Main Vocals - Underneath.wav') + title(983, 'Main Vocals - Underneath.wav')) +
  lane(115,
    '<rect x="-1" y="15.500" width="1159" height="48" fill="#800000" stroke="#2a0808"/>' + takeWaves('#2a0709', 1158) +
    '<path d="M296.500 16h5v47h-5z" fill="#4f8f80"/><path d="M297 24h4v30h-4z" fill="#1c3a34"/><path d="M0 56l6 7H0zM302 57l5 6h-5zM575 57l5 6h-5zM590 57l5 6h-5z" fill="#9a5a5a"/>' +
    wave(76, 9, '#6c6b6c', 1158) + wave(94, 9, '#666a66', 1158) +
    '<path d="M536 67v36M540 67v36M543 67v36M553 67v36M560 67v36M566 67v36M568 67v36M575 67v36" stroke="#222"/>' +
    curve(vol45.map(([x, y]) => [x, y + 1]), 105, '#2a4a2c', '#1f331f77') + dots(knots, '#1f3a20'),
    title(2, 'Master of Myself Main Vocals.wav') + title(303, 'Master of Myself Main Vocals.wav') + title(591, 'Master of Myself Main Vocals.wav'), 'muted') +
  lane(74, '<rect x="292.500" y="16.500" width="8" height="47" fill="#4a9090" stroke="#2a4444"/><path d="M294 23h6v10h-6zM294 46h6v10h-6z" fill="#233c3c"/>') +
  `<svg class="overlay">${grid}<path d="M663.500 0V492" stroke="#2f8f7c" stroke-width="1.500"/></svg>`;

/* mixer */
document.getElementById('master').innerHTML = `<div class="master-head">${fx(false)}
  <div class="knob-cell">${knob()}<span>center</span></div><div class="knob-cell mono"><svg viewBox="0 0 18 18"><g fill="none" stroke="#8a8a8a" stroke-width="1.300"><circle cx="6.500" cy="9" r="4"/><circle cx="11.500" cy="9" r="4"/></g></svg><span>MONO</span></div></div>
  <div class="master-body"><div class="meters"><div class="db">-1.18dB</div><div class="inf"><span>-inf</span><span>-inf</span></div>
  <div class="cols">${[['12', '6', '0-', '6-', '12-', '18-', '24-', '30-', '36-', '42-'], ['-6-', '-18-', '-30-', '-42-', '-54-'], ['12', '6', '-0', '-6', '-12', '-18', '-24', '-30', '-36', '-42']].map(c => `<div>${c.map(t => `<span>${t}</span>`).join('')}</div>`).join('')}</div>
  <div class="inf rms"><span>RMS</span><span>-inf</span></div></div>
  ${fader('Master volume', 135, 95)}
  <div class="side-col">${ms(false)}${route('y')}${trimbox()}</div></div>`;

const strip = ([n, c, name, val, v, o = '']) => {
  const muted = o.includes('mute');
  return `<article class="strip ${o}" style="${vars(c)}"><div class="strip-in">
  <div class="fxrow">${fx(!(n < 41 || n === 52))}</div>
  <div class="cap">${knob()}<div class="in"><select aria-label="Input ${n}"><option>in</option></select><svg viewBox="0 0 10 10"><circle cx="5" cy="5" r="4.300" fill="none" stroke="#ddd" stroke-width="1.300"/><path d="M2.500 4h5L5 7.500z" fill="#ddd"/></svg></div>
  <button class="arm" aria-label="Record arm ${n}"><svg viewBox="0 0 32 22"><path d="M-2 17.500C3 17.500 3.500 14 4.500 11a11.500 11.500 0 0 1 23 0C28.500 14 29 17.500 33 17.500z" fill="#242424"/><use href="#i-rec" x="6" y="2" width="20" height="20"/></svg></button></div>
  <div class="body"><div class="ctl"><div class="ctl-left"><div class="val">${val}</div><div class="fader-row">
  <div class="scale">${muted ? '<div class="badge">M</div>' : '<span>-inf</span>'}${['-6-', '-18-', '-30-', '-42-', '-54-'].map(t => `<span>${t}</span>`).join('')}</div>${fader('Volume ' + n, 62, 62 - v)}</div></div>
  <div class="side-col"><svg class="spk" viewBox="0 0 12 12"><use href="#i-speaker"/></svg>${ms(muted)}${route(n === 44 ? 'y' : n === 54 ? 'b' : '')}${trimbox()}</div></div>
  <div class="name"><span>${name}</span></div></div><div class="tag">${n}</div></div></article>`;
};
document.getElementById('strips').innerHTML = [
  [34, 'orange', 'Bridge', '-1.08', 23, 'first'],
  [35, 'light', 'Ch - Bridge - Ad', '0.00', 20, 'up sel'],
  [36, 'orange', 'Ch - Bridge - Ch', '0.00', 20, 'up'],
  [37, 'orange', 'Ch - Bridge - M', '0.00', 20, 'up'],
  [38, 'orange', 'Ch - Bridge - Ad', '0.00', 20, 'up'],
  [39, 'orange', 'Ch - Bridge - M', '0.00', 20, 'up end'],
  [40, 'orange', '', '0.00', 20],
  [41, 'pink', 'Ch Choir', '-3.24', 25, 'mute'],
  [42, 'pink', 'Ch Chorus Chc', '0.00', 20, 'mute'],
  [43, 'yellow', 'Ad Libs', '-8.81', 33, 'end'],
  [44, 'teal', '', '-0.43', 21, 'low'],
  [45, 'teal', 'Main Vocals', '-8.15', 32],
  [46, 'red', 'Old Vocals', '-8.15', 32, 'mute'],
  [47, 'teal', 'Main Vocals', '-2.94', 25],
  [48, 'grey', '', '-11.5', 37],
  [49, 'teal', 'Main Vocals', '0.00', 20],
  [50, 'teal', 'Delay Vocals', '-10.2', 35],
  [51, 'teal', 'Deep Vocals', '-14.9', 41],
  [52, 'teal', 'Whispers', '-18.6', 45, 'end'],
  [53, 'blue', 'Master of..001', '-6.04', 30, 'low mute'],
  [54, 'blue', 'Full Guitars', '-9.92', 34, 'low wide mute']
].map(strip).join('') + `<div class="strip edge low" style="${vars('blue')}"><div class="fxrow"></div><div class="cap"></div><div class="body"></div><div class="tag"></div></div>`;
```
